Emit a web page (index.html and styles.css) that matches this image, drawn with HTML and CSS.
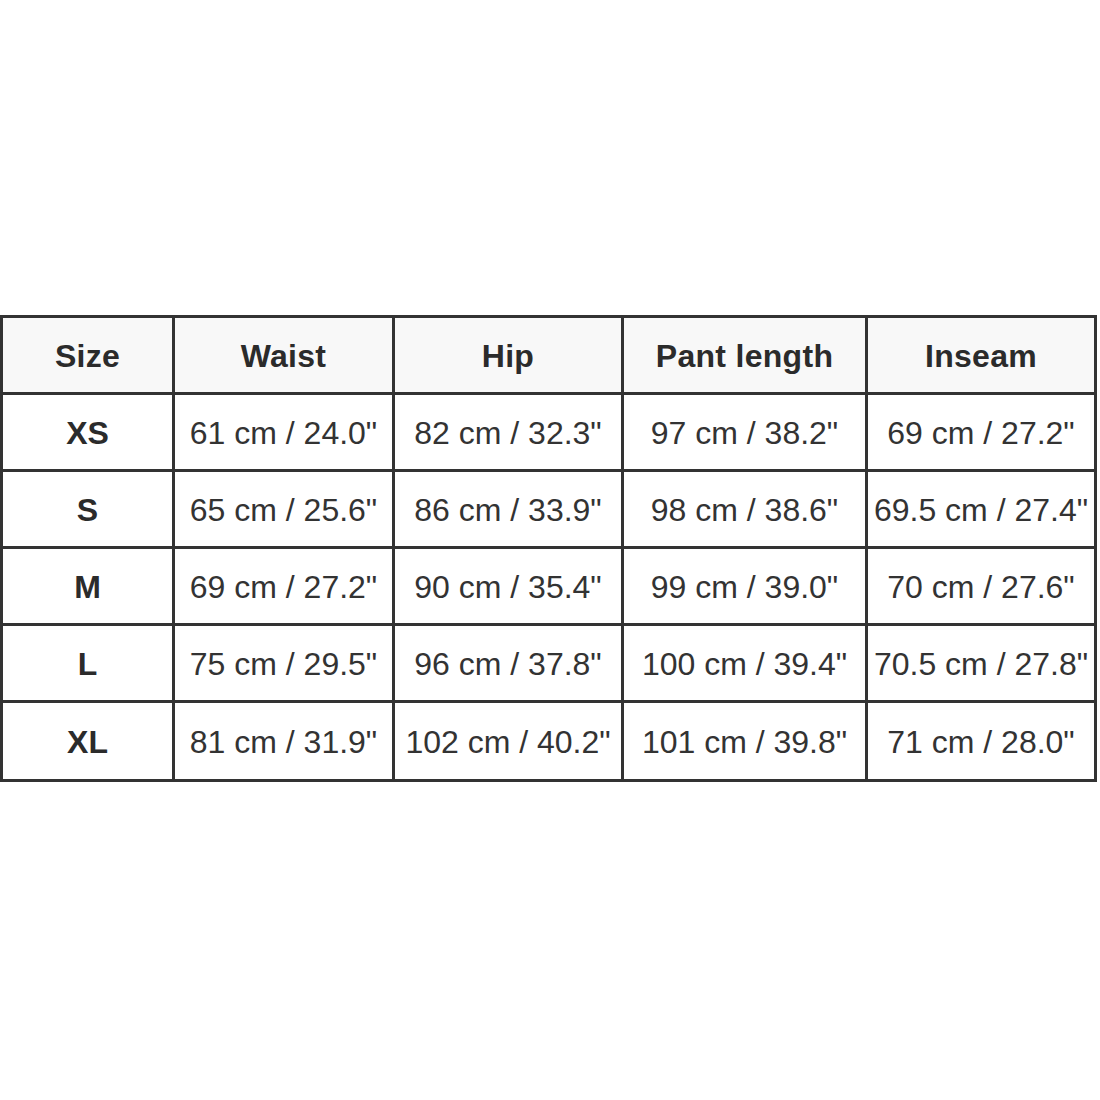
FILE: index.html
```html
<!DOCTYPE html>
<html lang="en">
<head>
<meta charset="utf-8">
<title>Size chart</title>
<link rel="stylesheet" href="styles.css">
</head>
<body>
<main class="page">
  <table class="size-table">
    <colgroup>
      <col class="c-size">
      <col class="c-waist">
      <col class="c-hip">
      <col class="c-length">
      <col class="c-inseam">
    </colgroup>
    <thead>
      <tr>
        <th>Size</th>
        <th>Waist</th>
        <th>Hip</th>
        <th>Pant length</th>
        <th>Inseam</th>
      </tr>
    </thead>
    <tbody>
      <tr>
        <th>XS</th>
        <td>61 cm / 24.0"</td>
        <td>82 cm / 32.3"</td>
        <td>97 cm / 38.2"</td>
        <td>69 cm / 27.2"</td>
      </tr>
      <tr>
        <th>S</th>
        <td>65 cm / 25.6"</td>
        <td>86 cm / 33.9"</td>
        <td>98 cm / 38.6"</td>
        <td>69.5 cm / 27.4"</td>
      </tr>
      <tr>
        <th>M</th>
        <td>69 cm / 27.2"</td>
        <td>90 cm / 35.4"</td>
        <td>99 cm / 39.0"</td>
        <td>70 cm / 27.6"</td>
      </tr>
      <tr>
        <th>L</th>
        <td>75 cm / 29.5"</td>
        <td>96 cm / 37.8"</td>
        <td>100 cm / 39.4"</td>
        <td>70.5 cm / 27.8"</td>
      </tr>
      <tr>
        <th>XL</th>
        <td>81 cm / 31.9"</td>
        <td>102 cm / 40.2"</td>
        <td>101 cm / 39.8"</td>
        <td>71 cm / 28.0"</td>
      </tr>
    </tbody>
  </table>
</main>
</body>
</html>
```
FILE: styles.css
```css
html, body {
  margin: 0;
  padding: 0;
  background: #ffffff;
}

.page {
  padding-top: 315px;
  font-family: "Liberation Sans", Arial, sans-serif;
  color: #333333;
}

.size-table {
  border-collapse: collapse;
  table-layout: fixed;
  width: 1097px;
  font-size: 32px;
}

.c-size { width: 172px; }
.c-waist { width: 220px; }
.c-hip { width: 229px; }
.c-length { width: 244px; }
.c-inseam { width: 229px; }

.size-table th,
.size-table td {
  border: 3px solid #333333;
  height: 71px;
  padding: 3px 0 0;
  text-align: center;
  vertical-align: middle;
  white-space: nowrap;
  overflow: visible;
}

.size-table tbody tr:last-child th,
.size-table tbody tr:last-child td {
  height: 73px;
}

.size-table thead th {
  background: #f8f8f8;
  font-weight: bold;
  color: #2b2b2b;
  letter-spacing: 0.3px;
}

.size-table tbody th {
  font-weight: bold;
  color: #2b2b2b;
}

.size-table td {
  font-weight: normal;
}
```
